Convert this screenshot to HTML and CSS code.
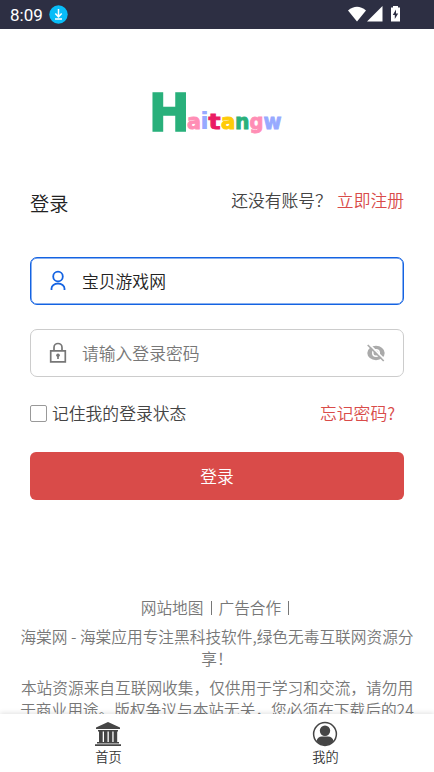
FILE: index.html
```html
<!DOCTYPE html>
<html lang="zh-CN">
<head>
<meta charset="utf-8">
<title>登录</title>
<link rel="stylesheet" href="styles.css">
</head>
<body>
<div class="screen">
  <header class="status">
    <span class="clock">8:09</span>
    <svg class="download" width="19" height="19" viewBox="0 0 19 19"><circle cx="9.5" cy="9.5" r="9.2" fill="#08bdf8"/><path d="M9.5 4v7.5M6.3 8.5l3.2 3.3 3.2-3.3M6 14h7" fill="none" stroke="#fff" stroke-width="1.5"/></svg>
    <svg class="system" width="53" height="17" viewBox="0 0 53 17" fill="#fff"><path d="M0 4.5Q9-3 18 4.5L9 15.5Z"/><path d="M34.5 0V15.5H19Z"/><path fill-rule="evenodd" d="M43 1.5h2V0h5v1.500h2V15.500h-9ZM48 3.500l-3.200 5.500h2v4l3.400-5.500h-2.200Z"/></svg>
  </header>
  <main class="page">
    <svg class="logo" width="132" height="48" viewBox="0 0 132 48">
      <text class="cap" x="-2.200" y="40.500" textLength="41" lengthAdjust="spacingAndGlyphs" fill="#29b07b" stroke="#29b07b">H</text>
      <g class="small">
        <text x="36" y="38.500" textLength="14" lengthAdjust="spacingAndGlyphs" fill="#ff8eb5" stroke="#ff8eb5">a</text>
        <text class="thin" x="49" y="39" textLength="9" lengthAdjust="spacingAndGlyphs" fill="#97aaff">i</text>
        <text x="57.500" y="38.500" textLength="12" lengthAdjust="spacingAndGlyphs" fill="#ea1c63" stroke="#ea1c63">t</text>
        <text x="70" y="38.500" textLength="14.500" lengthAdjust="spacingAndGlyphs" fill="#ffcb08" stroke="#ffcb08">a</text>
        <text x="84" y="38.500" textLength="14.500" lengthAdjust="spacingAndGlyphs" fill="#29b07b" stroke="#29b07b">n</text>
        <text x="98.500" y="38.500" textLength="14" lengthAdjust="spacingAndGlyphs" fill="#ff8eb5" stroke="#ff8eb5">g</text>
        <text x="112.500" y="38.500" textLength="18" lengthAdjust="spacingAndGlyphs" fill="#97aaff" stroke="#97aaff">w</text>
      </g>
    </svg>
    <div class="heading">
      <h1>登录</h1>
      <p>还没有账号？<a>立即注册</a></p>
    </div>
    <div class="field active">
      <svg width="18" height="22" viewBox="0 0 18 22" fill="none" stroke="#1463e2" stroke-width="1.800"><circle cx="9" cy="6.500" r="4.800"/><path d="M2.500 20v-1.500a6.500 5 0 0 1 13 0V20"/></svg>
      <span>宝贝游戏网</span>
    </div>
    <div class="field">
      <svg width="18" height="22" viewBox="0 0 18 22" fill="none" stroke="#777" stroke-width="1.700"><path d="M1.700 8.800h14.600v11H1.700ZM5 9V5.500a4 4 0 0 1 8 0V9"/><circle cx="9" cy="13.200" r="1.800" fill="#777" stroke="none"/><path d="M9 13v4"/></svg>
      <span>请输入登录密码</span>
      <svg class="eye" width="18" height="18" viewBox="0 0 18 18"><ellipse cx="9" cy="9" rx="8.700" ry="7.200" fill="#aaa"/><circle cx="9" cy="9" r="4" fill="#fff"/><circle cx="9" cy="9" r="2.500" fill="#aaa"/><path d="M2 0l16 16" stroke="#fff" stroke-width="1.800"/><path d="M.7 1l16 16" stroke="#aaa" stroke-width="1.700"/></svg>
    </div>
    <div class="options">
      <i class="check"></i><span>记住我的登录状态</span><a>忘记密码?</a>
    </div>
    <div class="submit">登录</div>
    <footer class="footer">
      <p class="links">网站地图<i></i>广告合作<i></i></p>
      <p>海棠网 - 海棠应用专注黑科技软件,绿色无毒互联网资源分<br>享！</p>
      <p>本站资源来自互联网收集，仅供用于学习和交流，请勿用<br>于商业用途。版权争议与本站无关，您必须在下载后的24</p>
    </footer>
  </main>
  <nav class="tabs">
    <div class="tab">
      <svg width="26" height="26" viewBox="0 0 26 26" fill="#454545"><path d="M13 1l12 5.500V8H1V6.500ZM3 9h20v1.500H3ZM4 10h3.700v11H4ZM9 10h3.500v11H9ZM13.800 10h3.500v11h-3.500ZM18.600 10h3.600v11h-3.600ZM2 21h22v1.500H2ZM0 23.300h26V25H0Z"/></svg>
      <span>首页</span>
    </div>
    <div class="tab">
      <svg width="26" height="26" viewBox="0 0 26 26"><circle cx="13" cy="13" r="11.400" fill="none" stroke="#454545" stroke-width="1.500"/><circle cx="13" cy="9.800" r="5.200" fill="#454545"/><path d="M4.500 20q1-4.500 5.500-4.500h6q4.500 0 5.500 4.500-3.500 4.300-8.500 4.300T4.500 20Z" fill="#454545"/></svg>
      <span>我的</span>
    </div>
  </nav>
</div>
</body>
</html>
```
FILE: styles.css
```css
* { box-sizing: border-box; }
body { margin: 0; font-family: "Noto Sans CJK SC", sans-serif; font-weight: 350; background: #fff; color: #222; }
h1, p { margin: 0; font-weight: inherit; }
svg { flex: none; display: block; }
.screen { height: 772px; display: flex; flex-direction: column; overflow: hidden; }
.status { height: 29px; flex: none; background: #2d2f43; display: flex; align-items: center; padding: 0 33px 0 10px; color: #fff; }
.clock { font: 400 17px Roboto, sans-serif; width: 39px; white-space: nowrap; }
.system { margin-left: auto; }
.page { flex: 1; min-height: 0; overflow: hidden; padding: 61px 30px 0; }
.logo { margin: 0 auto; overflow: visible; }
.logo text { font-family: "DejaVu Sans", sans-serif; font-weight: 700; }
.logo .cap { font-size: 52px; stroke-width: 1.600px; }
.logo .small text { font-size: 20.500px; stroke-width: .9px; }
.logo .small .thin { font-size: 23px; stroke-width: 0; }
.heading { display: flex; justify-content: space-between; margin-top: 48px; height: 71px; }
h1 { font-size: 19.200px; line-height: 34px; }
.heading p { font-size: 16.800px; line-height: 28px; color: #444; }
.heading a { margin-left: 5px; }
a { color: #d94b49; }
.field { height: 48px; border: 1px solid #ccc; border-radius: 7px; display: flex; align-items: center; padding: 0 18px; margin-bottom: 23px; color: #777; font-size: 16.800px; gap: 15px; }
.field span { line-height: 24px; padding-bottom: 1px; }
.active { border-color: #1463e2; box-shadow: inset 0 0 0 .5px #1463e2; color: #222; margin-bottom: 24px; }
.eye { margin-left: auto; }
.options { display: flex; align-items: center; height: 26px; font-size: 16.800px; color: #444; }
.options a { margin-left: auto; padding-right: 9px; }
.check { width: 17px; height: 17px; border: 1px solid #999; border-radius: 2px; margin-right: 5px; }
.submit { height: 48px; margin-top: 26px; border-radius: 6px; background: #d94b49; color: #fff; font-size: 16.800px; line-height: 48px; text-align: center; }
.footer { margin: 97px -15px 0; color: #777; font-size: 15.700px; line-height: 22.500px; text-align: center; white-space: nowrap; }
.footer p { margin-bottom: 6px; }
.links i { display: inline-block; width: 1px; height: 14px; background: #777; margin: 0 7px; vertical-align: -1px; }
.links i:last-child { margin-right: 4px; }
.tabs { height: 58px; flex: none; position: relative; background: #fff; display: flex; box-shadow: 0 -1px 5px rgba(0,0,0,.12); }
.tab { flex: 1; display: flex; flex-direction: column; align-items: center; padding-top: 7px; color: #333; font-size: 13.200px; line-height: 20px; }
.tab svg { margin-left: -1px; }
```
